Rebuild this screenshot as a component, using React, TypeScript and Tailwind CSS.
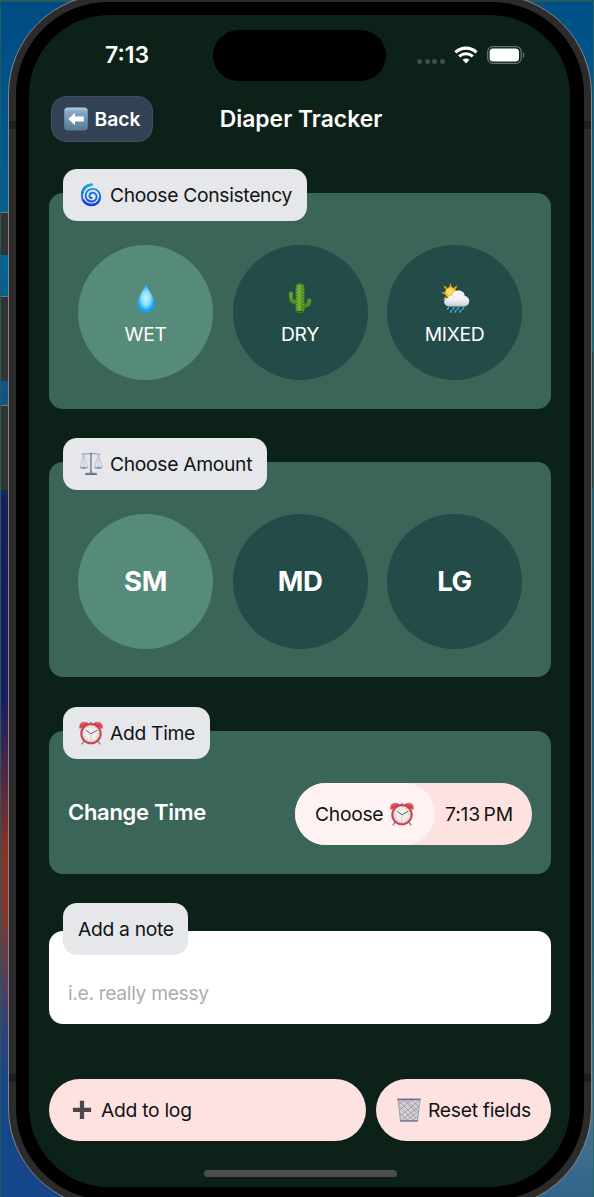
import React from "react";

type IconProps = { className?: string };

const LeftArrow = () => (
  <svg viewBox="0 0 24 24" className="h-6 w-6 shrink-0">
    <defs>
      <linearGradient id="key" x1="0" y1="0" x2="0" y2="1">
        <stop offset="0" stopColor="#b9d3e8" />
        <stop offset="0.18" stopColor="#86a9c7" />
        <stop offset="1" stopColor="#587a97" />
      </linearGradient>
    </defs>
    <rect x="0.2" y="0.4" width="23.6" height="23.2" rx="3.6" fill="url(#key)" />
    <path d="M4.3 12 11 5.8v3.7h8.8v5H11v3.7z" fill="#fff" />
  </svg>
);

const Cyclone = () => (
  <svg viewBox="0 0 24 24" className="h-6 w-6 shrink-0" fill="none" strokeLinecap="round">
    <defs>
      <linearGradient id="cyc" gradientUnits="userSpaceOnUse" x1="0" y1="0" x2="0" y2="24">
        <stop offset="0" stopColor="#22b0e0" />
        <stop offset="0.5" stopColor="#1672e6" />
        <stop offset="1" stopColor="#1838ea" />
      </linearGradient>
    </defs>
    <g stroke="url(#cyc)">
      <path
        d="M13.200 1.500C7 1.500 2.900 6 2.900 12.200c0 5.800 4 10 9.300 10 5.200 0 9-3.700 9-8.600 0-4.500-3.200-7.700-7.400-7.700-4.100 0-7.200 2.900-7.200 6.600 0 3.400 2.600 6 5.800 6 3 0 5.200-2.100 5.200-4.700 0-2.300-1.700-4-3.900-4-1.900 0-3.200 1.300-3.200 2.900 0 1.400 1 2.300 2.200 2.300"
        strokeWidth="1.900"
      />
      <path d="M3.300 10C4.200 5.500 7.500 2.400 12 1.800" strokeWidth="2.700" />
      <path d="M4.500 17.500c1.800 2.800 4.600 4.300 7.800 4.300 4 0 7.100-2.200 8.200-5.500" strokeWidth="2.500" />
    </g>
  </svg>
);

const Scale = () => (
  <svg viewBox="0 0 24 24" className="h-6 w-6 shrink-0" fill="none">
    <path d="M2.500 2.300 12 1.500l9.500.8" stroke="#8b9baa" strokeWidth="1.100" />
    <path d="M4.600 2.500 1 15h7.800L4.600 2.500v12M19.400 2.500 15.500 15h7.700L19.400 2.500v12" stroke="#adb4bb" strokeWidth="0.650" />
    <path d="M.6 15.300h8.300c-.7 2.300-7.500 2.300-8.300 0zM15.200 15.300h8.300c-.7 2.300-7.500 2.300-8.300 0z" fill="#7f93a8" />
    <path d="M12 .8v19.500" stroke="#6c8197" strokeWidth="1.700" />
    <path d="M12.300 2v18" stroke="#c1cfdb" strokeWidth="0.500" />
    <path d="M11 19h2l1 1.800h3.500l.7 2.300H5.800l.7-2.300H10z" fill="#8496a4" />
    <path d="M6.300 22.300h11.500" stroke="#4c5b68" strokeWidth="0.900" />
  </svg>
);

const AlarmClock = () => (
  <svg viewBox="0 0 24 24" className="h-6 w-6 shrink-0" fill="none">
    <path d="m5 20-2.200 3.300M19 20l2.200 3.300" stroke="#8c7778" strokeWidth="1.300" />
    <path d="M.7 8C-.5 4 1.500.8 5 .7c2.200 0 3.800.9 4.500 2.300zM23.300 8C24.500 4 22.500.8 19 .7c-2.200 0-3.800.9-4.500 2.300z" fill="#d84550" />
    <path d="M2 3.500C3 1.900 5 1.400 7 2M22 3.500C21 1.900 19 1.400 17 2" stroke="#f0848a" strokeWidth="0.900" />
    <path d="M12 .7V3" stroke="#a8a3a3" strokeWidth="2" />
    <circle cx="12" cy="12.600" r="9.700" fill="#f3eeee" stroke="#c9404b" strokeWidth="2" />
    <circle cx="12" cy="12.600" r="8.400" stroke="#b9a2a3" strokeWidth="0.600" />
    <circle cx="12" cy="12.600" r="6.900" stroke="#c98e90" strokeWidth="1.500" strokeDasharray="0.600 3.013" />
    <path d="m7.300 9.500 4.700 3.300 6-3.500" stroke="#5f6262" strokeWidth="1" />
    <path d="M12 12v7" stroke="#dda7a8" strokeWidth="0.600" />
  </svg>
);

const Drop = () => (
  <svg viewBox="0 0 30 30" className="h-[30px] w-[30px]">
    <defs>
      <radialGradient id="drop" cx="0.500" cy="0.500" r="0.560">
        <stop offset="0" stopColor="#c9f4ff" />
        <stop offset="0.450" stopColor="#8bdcfb" />
        <stop offset="0.750" stopColor="#24aff5" />
        <stop offset="1" stopColor="#149be8" />
      </radialGradient>
    </defs>
    <path d="M15 .8c1.400 5.200 8.800 13.500 8.800 20.200 0 5-3.800 8.600-8.800 8.600S6.200 26 6.200 21C6.200 14.300 13.600 6 15 .8z" fill="url(#drop)" />
    <path d="M8 21.500c1.200 4 3.800 5.400 7 5.400s5.800-1.400 7-5.400c.4 4.500-3 7.100-7 7.100s-7.400-2.600-7-7.100z" fill="#0c91ea" opacity=".6" />
  </svg>
);

const Cactus = () => (
  <svg viewBox="0 0 30 30" className="h-[30px] w-[30px]" fill="none">
    <g stroke="#4b8a25" strokeLinecap="round" strokeLinejoin="round">
      <path d="M6 10.500v4.200c0 3 2 4.300 6 4.500M24.200 17.500v1.300c0 3-2 4-6.200 4.200" strokeWidth="4.300" />
      <path d="M15 4.700v21.500" strokeWidth="9" />
    </g>
    <g stroke="#69aa35" strokeLinecap="round">
      <path d="M14.300 4v22" strokeWidth="4" />
      <path d="M5.700 10.500v4.500M24 17.700V19" strokeWidth="1.600" />
    </g>
    <g stroke="#9bcb5d" strokeWidth="0.800" strokeDasharray="0.800 2.200">
      <path d="M12 3v25M15 2v26M18 3v25M6 10v6l5 4" />
    </g>
    <path d="M11.500 28.700h7" stroke="#315f18" strokeWidth="1.500" />
  </svg>
);

const SunShower = () => (
  <svg viewBox="0 0 30 30" className="h-[30px] w-[30px]">
    <defs>
      <linearGradient id="cloud" x1="0" y1="0" x2="0" y2="1">
        <stop offset="0" stopColor="#fff" />
        <stop offset="0.600" stopColor="#eeeef4" />
        <stop offset="1" stopColor="#c5c8d5" />
      </linearGradient>
    </defs>
    <g fill="#e7a51e">
      <path d="m10.500 0 1.300 4.300H9.200zM3.500 2.300l3.800 2.500-2 1.800zM17.500 2.300l-1.800 4.300-2-1.800zM1 9.800l4.300-1v2.700zM3.200 17.500l1.700-4.200 2 2z" />
    </g>
    <circle cx="10.700" cy="9.600" r="5.600" fill="#ffc52e" />
    <circle cx="9.600" cy="8.300" r="3" fill="#ffdd66" />
    <path d="M9 23.500c-3 0-4.800-2-4.800-4.400 0-2.500 2-4.200 4-4.300.7-1.800 2.200-2.600 4-2.200C13 9.200 15.700 7.500 18.500 7.500c3.500 0 6 2.300 6.300 5.500 2.700.4 4.400 2.500 4.400 5 0 3.200-2.300 5.500-5.500 5.500z" fill="url(#cloud)" />
    <path d="M12 13.500c2-.9 3.700-.2 4.500 1.200M18 10.500c2.700-.7 5 .5 5.500 2.500" fill="none" stroke="#d7d8e1" strokeWidth="0.700" />
    <path d="m8.500 24.500-1 1.800M14 24.500l-1 1.800M18.500 24.500l-1 1.800M23.500 24.500l-1 1.800M11.500 27.300l-1 1.800M16 27.300l-1 1.800M20.800 27.300l-1 1.800" fill="none" stroke="#3ca9e0" strokeWidth="1.500" strokeLinecap="round" />
  </svg>
);

const Plus = () => (
  <svg viewBox="0 0 20 20" className="h-5 w-5 shrink-0">
    <path d="M7.900.8h4.200v7h7v4.100h-7v7H7.900v-7h-7V7.800h7z" fill="#484848" />
  </svg>
);

const Basket = () => (
  <svg viewBox="0 0 24 24" className="h-6 w-6 shrink-0" fill="none">
    <path d="M1 1.500h22L20.500 23h-17z" fill="#d6cfd4" />
    <path d="M2 6 7 2l13 13M2.500 12 14.500 2 22 9M3 18 21.500 3M5 22 21.500 8.500M10 22l11.500-9M16 22l5-4M2 3l17 17M2.500 8.500 16 22M3 15l7 7M9 2l12 11" stroke="#918f9b" strokeWidth="0.700" />
    <path d="M1 1.500 3.500 23M23 1.500 20.500 23" stroke="#8590a5" strokeWidth="0.800" />
    <path d="M.3 1.400h23.400" stroke="#65738f" strokeWidth="1.700" />
    <path d="M3.300 22.900h17.400" stroke="#65738f" strokeWidth="1.500" />
  </svg>
);

const Wifi = ({ className }: IconProps) => (
  <svg viewBox="0 0 24 18" className={className} fill="none" stroke="#fff">
    <path d="M1.400 6.300c6-5.600 15.200-5.600 21.200 0" strokeWidth="3.100" />
    <path d="M5.200 10.400c3.900-3.600 9.700-3.600 13.600 0" strokeWidth="3" />
    <path d="M8.600 13.800c2-1.700 4.800-1.700 6.800 0L12 17.400z" fill="#fff" stroke="none" />
  </svg>
);

const Battery = ({ className }: IconProps) => (
  <svg viewBox="0 0 38 18" className={className}>
    <rect x="0.700" y="0.700" width="33.500" height="16.600" rx="5" fill="none" stroke="#65736c" strokeWidth="1.300" />
    <rect x="2.600" y="2.500" width="29.400" height="13" rx="3.500" fill="#fff" />
    <path d="M35.800 6v6c2.200-.7 2.200-5.300 0-6z" fill="#65736c" />
  </svg>
);

const Badge = ({ className, children }: { className: string; children: React.ReactNode }) => (
  <div
    className={`relative z-10 ml-[14px] -mb-[28px] flex h-[52px] items-center rounded-[14px] bg-[#e5e7eb] pl-4 text-[19.3px] tracking-[-0.32px] whitespace-nowrap text-[#111314] ${className}`}
  >
    {children}
  </div>
);

const Circle = ({ active, children }: { active?: boolean; children: React.ReactNode }) => (
  <button
    className={`flex h-[135px] w-[135px] flex-col items-center justify-center rounded-full text-white ${
      active ? "bg-[#568b7a]" : "bg-[#234b47]"
    }`}
  >
    {children}
  </button>
);

const consistencies = [
  { name: "WET", icon: <Drop /> },
  { name: "DRY", icon: <Cactus /> },
  { name: "MIXED", icon: <SunShower /> },
];

const Wallpaper = () => (
  <div className="absolute inset-0 flex justify-between border-t-2 border-l border-[#235c5e]">
    <div className="flex h-full w-20 flex-col bg-[linear-gradient(180deg,#004b82_0px,#00649a_250px,#145384_400px,#17205a_500px,#1c1d60_700px,#8a3226_850px,#85382c_910px,#32407f_1030px,#15468a_1090px,#15468a_1197px)]">
      <div className="mt-[210px] h-[43px] w-2 border-t border-[#777] bg-[#333]" />
      <div className="mt-[41px] h-[85px] w-2 border-t border-[#777] bg-[#333]" />
      <div className="mt-[24px] h-[85px] w-2 border-t border-[#777] bg-[#333]" />
    </div>
    <div className="flex h-full w-20 flex-col items-end border-r border-[#246667] bg-[linear-gradient(180deg,#005087_0px,#006296_230px,#20637f_350px,#175286_700px,#245f8b_950px,#4d7690_1100px,#30648a_1197px)]">
      <div className="mt-[350px] h-[137px] w-[2px] bg-[#383838]" />
    </div>
  </div>
);

export default function App() {
  return (
    <div className="relative h-[1197px] w-[594px] overflow-hidden font-['Inter','Liberation_Sans',sans-serif]">
      <Wallpaper />
      <div className="relative -mt-[6px] ml-2 h-[1214px] w-[584px] rounded-[100px] border border-[#858585] bg-[#2b2b2b] p-[7px]">
        <div className="absolute top-[126px] left-0 h-2 w-[7px] bg-[#1e1e1e]" />
        <div className="absolute top-[126px] right-0 h-2 w-[7px] bg-[#1e1e1e]" />
        <div className="absolute top-[1079px] left-0 h-2 w-[7px] bg-[#1e1e1e]" />
        <div className="absolute top-[1079px] right-0 h-2 w-[7px] bg-[#1e1e1e]" />
        <div className="relative h-full rounded-[92px] bg-black p-[13px]">
          <div className="flex h-[1172px] w-[541px] flex-col rounded-[80px] bg-[#0c2118] pr-[19px] pl-5">
            <div className="flex h-[81px] shrink-0 items-center">
              <div className="-mt-px w-[164px] pl-[56px] text-[23px] font-semibold text-white">7:13</div>
              <div className="h-[51px] w-[173px] rounded-full bg-black" />
              <div className="mt-[11px] ml-[31px] flex gap-[2.600px]">
                <i className="h-[5px] w-[5px] rounded-full bg-[#3f5048]" />
                <i className="h-[5px] w-[5px] rounded-full bg-[#3f5048]" />
                <i className="h-[5px] w-[5px] rounded-full bg-[#3f5048]" />
                <i className="h-[5px] w-[5px] rounded-full bg-[#3f5048]" />
              </div>
              <Wifi className="-mt-[2px] ml-[9px] h-[18px] w-6 shrink-0" />
              <Battery className="-mt-[2px] ml-[9px] h-[18px] w-[38px] shrink-0" />
            </div>

            <header className="grid h-[46px] shrink-0 grid-cols-[102px_1fr_102px] items-center pl-[2px]">
              <button className="flex h-[46px] items-center gap-[7px] rounded-[15px] border-[1.500px] border-[#414e65] bg-[#334155] pl-[11.500px] text-[19.3px] font-semibold text-white">
                <LeftArrow />
                Back
              </button>
              <h1 className="text-center text-[22.8px] font-semibold tracking-[0.05px] text-white">Diaper Tracker</h1>
            </header>

            <section className="mt-[27px] shrink-0">
              <Badge className="w-[244px] gap-[7px]">
                <Cyclone />
                Choose Consistency
              </Badge>
              <div className="flex h-[216px] justify-between rounded-[14px] bg-[#3c655a] px-[29px] pt-[52px]">
                {consistencies.map((c, i) => (
                  <Circle key={c.name} active={i === 0}>
                    <span className="mt-[7px]">{c.icon}</span>
                    <span className="mt-[7px] text-[19.3px] leading-[29px] tracking-[-0.32px]">{c.name}</span>
                  </Circle>
                ))}
              </div>
            </section>

            <section className="mt-[29px] shrink-0">
              <Badge className="w-[204px] gap-[7px]">
                <Scale />
                Choose Amount
              </Badge>
              <div className="flex h-[215px] justify-between rounded-[14px] bg-[#3c655a] px-[29px] pt-[52px]">
                {["SM", "MD", "LG"].map((size, i) => (
                  <Circle key={size} active={i === 0}>
                    <span className="mt-px text-[27.5px] font-bold tracking-[-0.4px]">{size}</span>
                  </Circle>
                ))}
              </div>
            </section>

            <section className="mt-[30px] shrink-0">
              <Badge className="w-[147px] gap-[7px]">
                <AlarmClock />
                Add Time
              </Badge>
              <div className="flex h-[143px] justify-between rounded-[14px] bg-[#3c655a] pt-[52px] pr-[19px] pl-[19px]">
                <h2 className="mt-[13px] text-[22px] leading-[32px] font-semibold tracking-[-0.3px] whitespace-nowrap text-white">Change Time</h2>
                <button className="flex h-[62px] w-[237px] items-center rounded-full bg-[#fee2e2] text-[19.3px] tracking-[-0.3px] text-[#111314]">
                  <span className="flex h-full w-[140px] shrink-0 items-center gap-[7px] rounded-full bg-[#fef2f2] pl-[20px]">
                    Choose
                    <AlarmClock />
                  </span>
                  <span className="ml-[10px] tracking-[-0.1px] whitespace-nowrap">7:13&#8239;PM</span>
                </button>
              </div>
            </section>

            <section className="mt-[29px] shrink-0">
              <Badge className="w-[125px] -mb-[24px]!">
                <span className="-ml-px">Add a note</span>
              </Badge>
              <div className="flex h-[93px] items-end rounded-[14px] bg-white pb-[17px] pl-[19px] text-[19.3px] leading-[28px] tracking-[-0.35px] text-[#adadad]">
                i.e. really messy
              </div>
            </section>

            <div className="mt-[55px] flex shrink-0 gap-[10px] text-[19.3px] tracking-[-0.28px] text-[#111314]">
              <button className="flex h-[62px] w-[317px] items-center gap-[9px] rounded-full bg-[#fee2e2] pl-[23px]">
                <Plus />
                Add to log
              </button>
              <button className="flex h-[62px] flex-1 items-center gap-[7px] rounded-full bg-[#fee2e2] pl-[21px] whitespace-nowrap">
                <Basket />
                Reset fields
              </button>
            </div>
            <div className="mt-[29px] ml-[155px] h-[7px] w-[193px] shrink-0 rounded-full bg-[#4d4d4d]" />
          </div>
        </div>
      </div>
    </div>
  );
}
